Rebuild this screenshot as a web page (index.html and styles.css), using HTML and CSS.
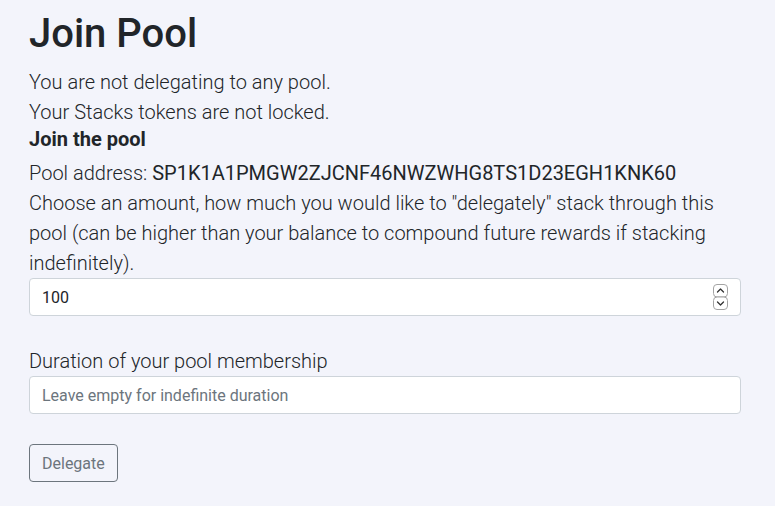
FILE: index.html
```html
<!DOCTYPE html>
<html>
<head>
<meta charset="utf-8">
<link rel="stylesheet" href="styles.css">
</head>
<body>
<main class="page">
  <h1 class="title">Join Pool</h1>
  <p class="lead">You are not delegating to any pool.</p>
  <p class="lead">Your Stacks tokens are not locked.</p>
  <h5 class="subtitle">Join the pool</h5>
  <p class="lead">Pool address: <span class="addr">SP1K1A1PMGW2ZJCNF46NWZWHG8TS1D23EGH1KNK60</span></p>
  <p class="lead">Choose an amount, how much you would like to "delegately" stack through this pool (can be higher than your balance to compound future rewards if stacking indefinitely).</p>
  <div class="number-wrap">
    <input class="field" type="number" value="100">
    <svg class="spin" width="15" height="26" viewBox="0 0 15 26" aria-hidden="true">
      <rect x="0.5" y="0.5" width="14" height="12.5" rx="3.5" fill="#fff" stroke="#a3a3a3"/>
      <rect x="0.5" y="13" width="14" height="12.5" rx="3.5" fill="#fff" stroke="#a3a3a3"/>
      <path d="M4.5 8 L7.5 5 L10.5 8" fill="none" stroke="#333" stroke-width="1.3" stroke-linecap="round" stroke-linejoin="round"/>
      <path d="M4.5 18 L7.5 21 L10.5 18" fill="none" stroke="#333" stroke-width="1.3" stroke-linecap="round" stroke-linejoin="round"/>
    </svg>
  </div>
  <label class="lead label">Duration of your pool membership</label>
  <input class="field" type="text" placeholder="Leave empty for indefinite duration">
  <div class="actions">
    <button class="btn">Delegate</button>
  </div>
</main>
</body>
</html>
```
FILE: styles.css
```css
html, body {
  margin: 0;
  padding: 0;
  background: #f3f4fb;
}
body {
  font-family: Roboto, "Liberation Sans", sans-serif;
  color: #212529;
}
.page {
  display: flex;
  flex-direction: column;
  align-items: flex-start;
  padding: 10px 34px 0 29px;
}
.title {
  margin: 0 0 9px;
  font-size: 40px;
  font-weight: 500;
  line-height: 48px;
}
.lead {
  margin: 0;
  font-size: 20px;
  font-weight: 300;
  line-height: 30px;
}
.subtitle {
  margin: 0 0 7px;
  font-size: 20px;
  font-weight: 700;
  line-height: 24px;
}
.addr {
  font-weight: 400;
}
.number-wrap {
  position: relative;
  display: flex;
}
.field {
  box-sizing: border-box;
  width: 712px;
  height: 38px;
  margin: 0;
  padding: 6px 12px;
  font-family: Roboto, "Liberation Sans", sans-serif;
  font-size: 16px;
  color: #212529;
  background: #fff;
  border: 1px solid #ced4da;
  border-radius: 4px;
  outline: none;
  -moz-appearance: textfield;
}
.field::-webkit-inner-spin-button,
.field::-webkit-outer-spin-button {
  -webkit-appearance: none;
  margin: 0;
}
.spin {
  position: absolute;
  right: 13px;
  top: 6px;
}
.field::placeholder {
  color: #6c757d;
}
.label {
  margin-top: 30px;
}
.actions {
  margin-top: 30px;
}
.btn {
  box-sizing: border-box;
  height: 38px;
  padding: 6px 12px;
  font-family: Roboto, "Liberation Sans", sans-serif;
  font-size: 16px;
  color: #6c757d;
  background: transparent;
  border: 1px solid #6c757d;
  border-radius: 4px;
}
```
